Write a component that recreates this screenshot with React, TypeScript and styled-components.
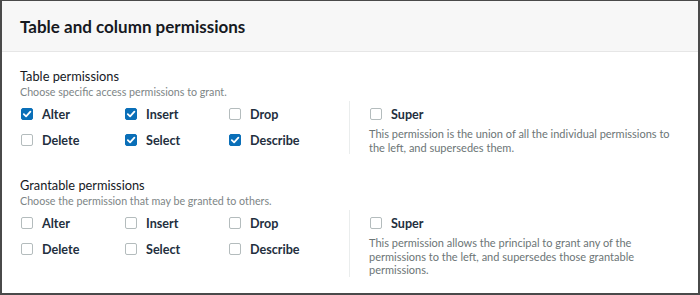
import styled, {createGlobalStyle} from "styled-components";

const Global = createGlobalStyle`
    html, body {
        margin: 0;
        padding: 0;
        background: #ffffff;
    }
    * {
        box-sizing: border-box;
    }
`

const Frame = styled.div`
    width: 700px;
    height: 295px;
    border: 2px solid #4a4a4a;
    border-top-width: 1px;
    background: #ffffff;
    font-family: Lato, "Noto Sans", sans-serif;
    color: #16191f;
    overflow: hidden;
`

const Header = styled.div`
    height: 51px;
    padding: 0 18px;
    display: flex;
    align-items: center;
    background: #f7f7f7;
    border-bottom: 1px solid #e6e6e6;
`

const Title = styled.h2`
    margin: 0;
    font-size: 17px;
    font-weight: 700;
    color: #16191f;
`

const Body = styled.div`
    padding: 16px 18px 0;
    display: flex;
    flex-direction: column;
    gap: 23px;
`

const Section = styled.section``

const SectionTitle = styled.div`
    font-size: 12.8px;
    font-weight: 400;
    line-height: 16px;
    color: #16191f;
`

const Hint = styled.div`
    font-size: 10.7px;
    line-height: 15px;
    color: #7d8586;
`

const Split = styled.div`
    display: grid;
    grid-template-columns: 330px 1fr;
    margin-top: 2px;
`

const Grid = styled.div`
    display: grid;
    grid-template-columns: repeat(3, 104px);
    grid-auto-rows: 26px;
    border-right: 1px solid #eaeded;
    align-content: start;
`

const Side = styled.div`
    padding-left: 19px;
`

const Option = styled.label`
    display: flex;
    align-items: center;
    gap: 9px;
    height: 26px;
    padding-left: 1px;
    font-size: 12.6px;
    font-weight: 700;
    color: #232f3e;
`

const Box = styled.span<{$on?: boolean}>`
    width: 12px;
    height: 12px;
    flex: none;
    border-radius: 2px;
    border: 1px solid ${p => p.$on ? "#0a6fb8" : "#b4bcbd"};
    background: ${p => p.$on ? "#0a6fb8" : "#ffffff"};
    display: flex;
    align-items: center;
    justify-content: center;
`

const Desc = styled.div`
    font-size: 11px;
    line-height: 13.5px;
    color: #6c7576;
    max-width: 303px;
`

function Check({on}: {on?: boolean}) {
    return (
        <Box $on={on}>
            {on ? (
                <svg width="10" height="10" viewBox="0 0 10 10">
                    <path d="M1.8 5.2 L4.1 7.4 L8.4 2.7" fill="none" stroke="#ffffff" strokeWidth="1.8" strokeLinecap="round" strokeLinejoin="round"/>
                </svg>
            ) : null}
        </Box>
    )
}

type Perm = {name: string, on?: boolean}

function Block({title, hint, perms, desc}: {title: string, hint: string, perms: Perm[], desc: string}) {
    return (
        <Section>
            <SectionTitle>{title}</SectionTitle>
            <Hint>{hint}</Hint>
            <Split>
                <Grid>
                    {perms.map(p => (
                        <Option key={p.name}><Check on={p.on}/>{p.name}</Option>
                    ))}
                </Grid>
                <Side>
                    <Option><Check/>Super</Option>
                    <Desc>{desc}</Desc>
                </Side>
            </Split>
        </Section>
    )
}

export default function App() {
    return (
        <Frame>
            <Global/>
            <Header>
                <Title>Table and column permissions</Title>
            </Header>
            <Body>
                <Block
                    title="Table permissions"
                    hint="Choose specific access permissions to grant."
                    perms={[
                        {name: "Alter", on: true},
                        {name: "Insert", on: true},
                        {name: "Drop"},
                        {name: "Delete"},
                        {name: "Select", on: true},
                        {name: "Describe", on: true},
                    ]}
                    desc="This permission is the union of all the individual permissions to the left, and supersedes them."
                />
                <Block
                    title="Grantable permissions"
                    hint="Choose the permission that may be granted to others."
                    perms={[
                        {name: "Alter"},
                        {name: "Insert"},
                        {name: "Drop"},
                        {name: "Delete"},
                        {name: "Select"},
                        {name: "Describe"},
                    ]}
                    desc="This permission allows the principal to grant any of the permissions to the left, and supersedes those grantable permissions."
                />
            </Body>
        </Frame>
    )
}
